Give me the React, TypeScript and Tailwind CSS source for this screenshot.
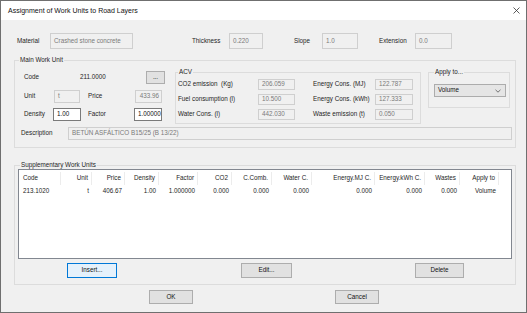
import React from 'react';

const cols = [
  { h: 'Code', v: '213.1020', w: 'w-[42px] pl-[4px] text-left' },
  { h: 'Unit', v: 't', w: 'w-[31px] pr-[3px] text-right' },
  { h: 'Price', v: '406.67', w: 'w-[33px] pr-[3px] text-right' },
  { h: 'Density', v: '1.00', w: 'w-[34px] pr-[3px] text-right' },
  { h: 'Factor', v: '1.000000', w: 'w-[39px] pr-[3px] text-right' },
  { h: 'CO2', v: '0.000', w: 'w-[34px] pr-[3px] text-right' },
  { h: 'C.Comb.', v: '0.000', w: 'w-[40px] pr-[3px] text-right' },
  { h: 'Water C.', v: '0.000', w: 'w-[40px] pr-[3px] text-right' },
  { h: 'Energy.MJ C.', v: '0.000', w: 'w-[63px] pr-[3px] text-right' },
  { h: 'Energy.kWh C.', v: '0.000', w: 'w-[50px] pr-[3px] text-right' },
  { h: 'Wastes', v: '0.000', w: 'w-[35px] pr-[3px] text-right' },
  { h: 'Apply to', v: 'Volume', w: 'w-[39px] pr-[3px] text-right' },
];

// read-only edit box
const Field = ({ value, className }: { value: string; className: string }) => (
  <div className={`h-full border border-[#cfcfcf] bg-[#f0f0f0] text-[#7a7a7a] flex items-center pl-[3px] overflow-hidden whitespace-nowrap ${className}`}>
    {value}
  </div>
);

// editable edit box
const Edit = ({ value, className }: { value: string; className: string }) => (
  <div className={`h-full border border-[#7a7a7a] bg-white text-[#111] flex items-center pl-[3px] overflow-hidden whitespace-nowrap ${className}`}>
    {value}
  </div>
);

const Button = ({ label, className }: { label: string; className: string }) => (
  <div className={`border border-[#adadad] bg-[#e1e1e1] flex items-center justify-center text-[#111] ${className}`}>
    {label}
  </div>
);

const App: React.FC = () => {
  return (
    <div className="w-[527px] h-[313px] border border-[#6f6f6f] bg-[#f0f0f0] flex flex-col overflow-hidden font-['Liberation_Sans',Arial,sans-serif] text-[6.3px] text-[#1e1e1e] leading-none">
      {/* title bar */}
      <div className="h-[19px] bg-white flex items-center justify-between pl-[7px] pr-[6px]">
        <span className="text-[7px] text-[#111]">Assignment of Work Units to Road Layers</span>
        <svg width="7" height="7" viewBox="0 0 7 7" className="mt-[-1px]">
          <path d="M0.5 0.5 L6.5 6.5 M6.5 0.5 L0.5 6.5" stroke="#333" strokeWidth="0.8" />
        </svg>
      </div>

      <div className="flex-1 flex flex-col pl-[13px] pr-[10px] pt-[13px]">
        {/* material row */}
        <div className="h-[16px] flex items-center">
          <span className="ml-[3px] w-[33px]">Material</span>
          <Field value="Crashed stone concrete" className="w-[83px]" />
          <span className="ml-[59px] w-[37px]">Thickness</span>
          <Field value="0.220" className="w-[34px]" />
          <span className="ml-[31px] w-[28px]">Slope</span>
          <Field value="1.0" className="w-[36px]" />
          <span className="ml-[21px] w-[36px]">Extension</span>
          <Field value="0.0" className="w-[37px]" />
        </div>

        {/* main work unit */}
        <div className="relative mt-[11px] h-[88px] border border-[#dcdcdc] flex flex-col">
          <span className="absolute -top-[4px] left-[4px] bg-[#f0f0f0] px-[1px]">Main Work Unit</span>
          <div className="flex items-start pt-[10px]">
            <div className="ml-[9px] w-[141px] flex flex-col">
              <div className="h-[13px] flex items-center">
                <span className="w-[56px]">Code</span>
                <span className="w-[66px]">211.0000</span>
                <Button label="..." className="w-[19px] h-[13px]" />
              </div>
              <div className="h-[13px] mt-[6px] flex items-center">
                <span className="w-[30px]">Unit</span>
                <Field value="t" className="w-[26px]" />
                <span className="ml-[8px] w-[47px]">Price</span>
                <Field value="433.96" className="w-[27px] justify-end pr-[2px]" />
              </div>
              <div className="h-[13px] mt-[5px] flex items-center">
                <span className="w-[29px]">Density</span>
                <Edit value="1.00" className="w-[28px]" />
                <span className="ml-[7px] w-[46px]">Factor</span>
                <Edit value="1.00000" className="w-[28px]" />
              </div>
            </div>

            {/* ACV */}
            <div className="relative ml-[10px] mt-[1px] w-[246px] h-[52px] border border-[#dcdcdc] flex flex-col pt-[6px] gap-[4px]">
              <span className="absolute -top-[4px] left-[2px] bg-[#f0f0f0] px-[1px]">ACV</span>
              {[
                ['CO2 emission  (Kg)', '206.059', 'Energy Cons. (MJ)', '122.787'],
                ['Fuel consumption (l)', '10.500', 'Energy Cons. (kWh)', '127.333'],
                ['Water Cons. (l)', '442.030', 'Waste emission (t)', '0.050'],
              ].map((r) => (
                <div key={r[0]} className="h-[11px] flex items-center pl-[2px]">
                  <span className="w-[80px] whitespace-pre">{r[0]}</span>
                  <Field value={r[1]} className="w-[37px]" />
                  <span className="ml-[18px] w-[62px]">{r[2]}</span>
                  <Field value={r[3]} className="w-[38px]" />
                </div>
              ))}
            </div>

            {/* apply to */}
            <div className="relative ml-[7px] mt-[1px] w-[82px] h-[36px] border border-[#dcdcdc] pt-[11px] pl-[5px]">
              <span className="absolute -top-[4px] left-[5px] bg-[#f0f0f0] px-[1px]">Apply to...</span>
              <div className="w-[72px] h-[13px] border border-[#acacac] bg-[#e5e5e5] flex items-center justify-between pl-[3px] pr-[4px] text-[#111]">
                <span>Volume</span>
                <svg width="6" height="4" viewBox="0 0 6 4">
                  <path d="M0.5 0.8 L3 3.2 L5.5 0.8" fill="none" stroke="#555" strokeWidth="0.8" />
                </svg>
              </div>
            </div>
          </div>

          <div className="h-[13px] mt-[3px] flex items-center">
            <span className="ml-[6px] w-[47px]">Description</span>
            <Field value="BETÚN ASFÁLTICO B15/25 (B 13/22)" className="flex-1 mr-[3px]" />
          </div>
        </div>

        {/* supplementary work units */}
        <div className="relative mt-[17px] h-[120px] border border-[#dcdcdc] flex flex-col px-[3px] pt-[3px]">
          <span className="absolute -top-[4px] left-[5px] bg-[#f0f0f0] px-[1px]">Supplementary Work Units</span>
          <div className="h-[90px] border border-[#828790] bg-white flex flex-col pt-[2px]">
            <div className="h-[13px] flex">
              {cols.map((c) => (
                <div key={c.h} className={`${c.w} flex items-center border-r border-[#ececec] justify-end first:justify-start whitespace-nowrap`}>
                  {c.h}
                </div>
              ))}
            </div>
            <div className="h-[12px] flex">
              {cols.map((c) => (
                <div key={c.h} className={`${c.w} flex items-center justify-end first:justify-start whitespace-nowrap`}>
                  {c.v}
                </div>
              ))}
            </div>
          </div>
          <div className="mt-[4px] h-[15px] flex">
            <div className="ml-[49px] w-[50px] border border-[#0078d7] bg-[#e5f1fb] flex items-center justify-center text-[#111]">Insert...</div>
            <Button label="Edit..." className="ml-[124px] w-[51px]" />
            <Button label="Delete" className="ml-[123px] w-[49px]" />
          </div>
        </div>

        {/* ok / cancel */}
        <div className="mt-[5px] h-[14px] flex">
          <Button label="OK" className="ml-[135px] w-[44px]" />
          <Button label="Cancel" className="ml-[142px] w-[44px]" />
        </div>
      </div>
    </div>
  );
};

export default App;
